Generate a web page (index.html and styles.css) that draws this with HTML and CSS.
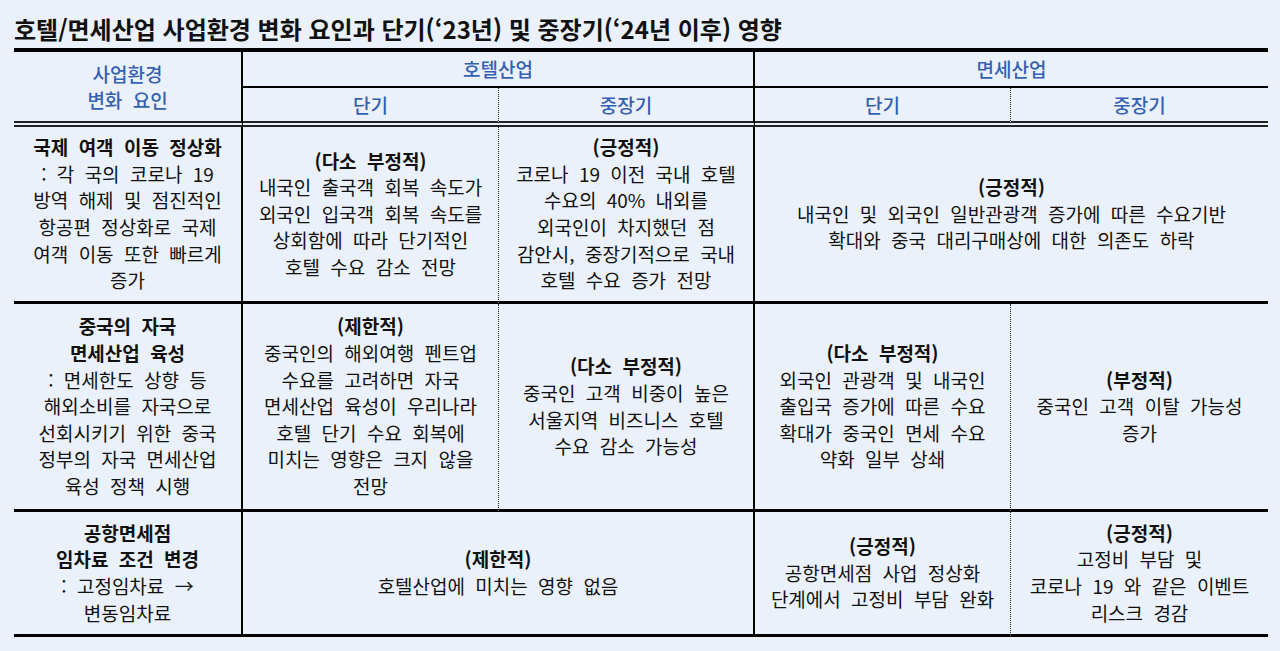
FILE: index.html
```html
<!DOCTYPE html>
<html lang="ko">
<head>
<meta charset="utf-8">
<title>호텔/면세산업 사업환경 변화 요인</title>
<link rel="stylesheet" href="styles.css">
</head>
<body>
<div class="page">
  <h1 class="title">호텔/면세산업 사업환경 변화 요인과 단기(‘23년) 및 중장기(‘24년 이후) 영향</h1>
  <div class="tbl">
    <div class="cell head c1 rA2 br-solid bb-dbl">사업환경<br>변화 요인</div>
    <div class="cell head c23 bb-h br-solid">호텔산업</div>
    <div class="cell head c45 bb-h">면세산업</div>
    <div class="cell head c2 bb-dbl br-dot">단기</div>
    <div class="cell head c3 bb-dbl br-solid">중장기</div>
    <div class="cell head c4 bb-dbl br-dot">단기</div>
    <div class="cell head c5 bb-dbl">중장기</div>

    <div class="cell c1 bb br-solid"><p><b>국제 여객 이동 정상화</b><br>: 각 국의 코로나 19<br>방역 해제 및 점진적인<br>항공편 정상화로 국제<br>여객 이동 또한 빠르게<br>증가</p></div>
    <div class="cell c2 bb br-dot"><p><b>(다소 부정적)</b><br>내국인 출국객 회복 속도가<br>외국인 입국객 회복 속도를<br>상회함에 따라 단기적인<br>호텔 수요 감소 전망</p></div>
    <div class="cell c3 bb br-solid"><p><b>(긍정적)</b><br>코로나 19 이전 국내 호텔<br>수요의 40% 내외를<br>외국인이 차지했던 점<br>감안시, 중장기적으로 국내<br>호텔 수요 증가 전망</p></div>
    <div class="cell c45 bb"><p><b>(긍정적)</b><br>내국인 및 외국인 일반관광객 증가에 따른 수요기반<br>확대와 중국 대리구매상에 대한 의존도 하락</p></div>

    <div class="cell c1 bb br-solid"><p><b>중국의 자국<br>면세산업 육성</b><br>: 면세한도 상향 등<br>해외소비를 자국으로<br>선회시키기 위한 중국<br>정부의 자국 면세산업<br>육성 정책 시행</p></div>
    <div class="cell c2 bb br-dot"><p><b>(제한적)</b><br>중국인의 해외여행 펜트업<br>수요를 고려하면 자국<br>면세산업 육성이 우리나라<br>호텔 단기 수요 회복에<br>미치는 영향은 크지 않을<br>전망</p></div>
    <div class="cell c3 bb br-solid"><p><b>(다소 부정적)</b><br>중국인 고객 비중이 높은<br>서울지역 비즈니스 호텔<br>수요 감소 가능성</p></div>
    <div class="cell c4 bb br-dot"><p><b>(다소 부정적)</b><br>외국인 관광객 및 내국인<br>출입국 증가에 따른 수요<br>확대가 중국인 면세 수요<br>약화 일부 상쇄</p></div>
    <div class="cell c5 bb"><p><b>(부정적)</b><br>중국인 고객 이탈 가능성<br>증가</p></div>

    <div class="cell c1 bb br-solid"><p><b>공항면세점<br>임차료 조건 변경</b><br>: 고정임차료 →<br>변동임차료</p></div>
    <div class="cell c23 bb br-solid"><p><b>(제한적)</b><br>호텔산업에 미치는 영향 없음</p></div>
    <div class="cell c4 bb br-dot"><p><b>(긍정적)</b><br>공항면세점 사업 정상화<br>단계에서 고정비 부담 완화</p></div>
    <div class="cell c5 bb"><p><b>(긍정적)</b><br>고정비 부담 및<br>코로나 19 와 같은 이벤트<br>리스크 경감</p></div>
  </div>
</div>
</body>
</html>
```

FILE: styles.css
```css
html, body {
  margin: 0;
  padding: 0;
}
body {
  background: #ebf1fa;
  color: #111;
  font-family: "Noto Sans CJK KR", "Noto Sans", sans-serif;
}
.page {
  padding: 0 12px 0 14px;
}
.title {
  margin: 0;
  box-sizing: border-box;
  height: 48px;
  padding-top: 12px;
  font-size: 24px;
  line-height: 34px;
  font-weight: bold;
  color: #111;
  white-space: nowrap;
}
.tbl {
  display: grid;
  width: 1254px;
  grid-template-columns: 229px 256px 256px 256px 257px;
  grid-template-rows: 36px 39px 177px 208px 125px;
  border-top: 4px solid #000;
}
.cell {
  box-sizing: border-box;
  display: flex;
  flex-direction: column;
  align-items: center;
  justify-content: center;
  text-align: center;
  font-size: 19px;
  line-height: 26.6px;
  word-spacing: 5px;
  white-space: nowrap;
}
.cell p {
  margin: 0;
}
.cell b {
  font-weight: bold;
}
.head {
  color: #3561b1;
  line-height: 26px;
  font-weight: 500;
}
.c1 { grid-column: 1; }
.c2 { grid-column: 2; }
.c3 { grid-column: 3; }
.c4 { grid-column: 4; }
.c5 { grid-column: 5; }
.c23 { grid-column: 2 / span 2; }
.c45 { grid-column: 4 / span 2; }
.rA2 { grid-row: 1 / span 2; }
.br-solid { border-right: 2px solid #000; }
.br-dot { border-right: 1px dotted #222; }
.bb { border-bottom: 3px solid #000; }
.bb-h { border-bottom: 2px solid #000; }
.bb-dbl { border-bottom: 6px double #222; }
```
